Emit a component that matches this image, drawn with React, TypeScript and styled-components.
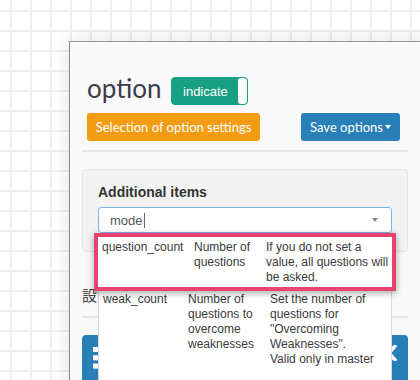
import React from 'react';
import styled, { createGlobalStyle } from 'styled-components';

const GlobalStyle = createGlobalStyle`
  html, body {
    margin: 0;
    height: 380px;
    overflow: hidden;
  }
  body {
    background-color: #fff;
    background-image:
      linear-gradient(to right, #efefef 2px, transparent 2px),
      linear-gradient(to bottom, #efefef 2px, transparent 2px);
    background-size: 20px 20px;
    background-position: 10px 10px;
    font-family: "Liberation Sans", Arial, sans-serif;
  }
`;

const Page = styled.div`
  padding: 41px 0 0 69px;
`;

const Panel = styled.div`
  width: 400px;
  height: 360px;
  box-sizing: border-box;
  padding-left: 12px;
  background: #f9f9f9;
  border-top: 1px solid #9a9a9a;
  border-left: 1px solid #8a8a8a;
  box-shadow: 0 0 18px rgba(0, 0, 0, 0.13);
`;

const Content = styled.div`
  width: 326px;
`;

// header: title + toggle
const Header = styled.div`
  display: flex;
  align-items: center;
  gap: 10px;
  height: 28px;
  margin-top: 35px;
  padding-left: 5px;
`;

const Title = styled.h1`
  margin: 0 0 7px;
  font-family: Lato, "Open Sans", sans-serif;
  font-size: 26px;
  font-weight: 400;
  line-height: 28px;
  color: #3c3b4a;
`;

const Toggle = styled.div`
  display: flex;
  width: 77px;
  height: 28px;
  box-sizing: border-box;
  border: 1px solid #18a084;
  border-radius: 4px;
  overflow: hidden;
  background: #19a084;
`;

const ToggleLabel = styled.span`
  flex: 1;
  padding-top: 2px;
  line-height: 24px;
  text-align: center;
  font-size: 13px;
  color: #fff;
`;

const ToggleKnob = styled.span`
  width: 9px;
  background: #fff;
  border-radius: 3px;
`;

const ButtonRow = styled.div`
  display: flex;
  justify-content: space-between;
  margin-top: 8px;
  padding: 0 8px 0 5px;
`;

const Button = styled.button<{ $color: string; $w: number }>`
  width: ${(p) => p.$w}px;
  height: 28px;
  padding: 0;
  border: none;
  border-radius: 3px;
  background: ${(p) => p.$color};
  color: #fff;
  font-family: Lato, "Open Sans", sans-serif;
  font-size: 13px;
  display: flex;
  align-items: center;
  justify-content: center;
`;

const Caret = styled.span<{ $color: string }>`
  display: inline-block;
  margin-left: 2px;
  border-top: 4px solid ${(p) => p.$color};
  border-left: 3px solid transparent;
  border-right: 3px solid transparent;
`;

const Divider = styled.div<{ $top: number }>`
  margin-top: ${(p) => p.$top}px;
  border-top: 2px solid #e6e6e6;
`;

const Well = styled.div`
  margin-top: 17px;
  padding: 12px 15px 18px;
  background: #f3f3f3;
  border: 1px solid #e6e6e6;
  border-radius: 4px;
`;

const Label = styled.div`
  margin-bottom: 5px;
  font-size: 14px;
  font-weight: 700;
  line-height: 20px;
  color: #333;
`;

const SelectWrap = styled.div`
  position: relative;
`;

const Select = styled.div`
  display: flex;
  align-items: center;
  justify-content: space-between;
  height: 26px;
  box-sizing: border-box;
  padding: 0 13px 0 11px;
  background: #fff;
  border: 1px solid #78b5e6;
  border-radius: 3px;
`;

const Value = styled.span`
  display: flex;
  align-items: center;
  font-size: 13px;
  color: #555;
`;

const Cursor = styled.span`
  width: 1px;
  height: 15px;
  margin-left: 1px;
  background: #666;
`;

const Dropdown = styled.div`
  position: absolute;
  top: 100%;
  left: 0;
  right: 0;
  z-index: 5;
  height: 190px;
  box-sizing: border-box;
  background: #fff;
  border: 1px solid #d8d8d8;
  border-top: none;
`;

const Row = styled.div<{ $cols: string }>`
  display: grid;
  grid-template-columns: ${(p) => p.$cols};
  padding: 1px 0 0 4px;
  font-size: 12px;
  line-height: 15px;
  color: #3a3a3a;
  white-space: nowrap;
`;

const HighlightRow = styled(Row)`
  position: relative;
  margin: 0 -5px;
  padding: 3px 0 2px 4px;
  border: 4px solid #e8436f;
  background: #fff;
  box-shadow: 0 2px 7px rgba(0, 0, 0, 0.35);
`;

// page text sitting under the open list
const SettingLabel = styled.div`
  margin-top: 33px;
  font-family: "Noto Sans CJK JP", sans-serif;
  font-size: 15px;
  line-height: 20px;
  color: #444;
`;

const BigButton = styled.div`
  display: flex;
  justify-content: space-between;
  align-items: flex-start;
  height: 60px;
  margin-top: 17px;
  padding: 10px 11px 0 11px;
  background: #2980b9;
  border-radius: 4px;
`;

const BarsIcon = () => (
  <svg width="24" height="22" viewBox="0 0 24 22" style={{ marginTop: 2 }}>
    <rect x="0" y="0" width="24" height="5" fill="#fff" />
    <rect x="0" y="8.3" width="24" height="5" fill="#fff" />
    <rect x="0" y="16.6" width="24" height="5" fill="#fff" />
  </svg>
);

const CloseIcon = () => (
  <svg width="16" height="16" viewBox="0 0 16 16">
    <path d="M1 0 L15 16 M15 0 L1 16" stroke="#fff" strokeWidth="3.5" />
  </svg>
);

const App = () => {
  return (
    <>
      <GlobalStyle />
      <Page>
        <Panel>
          <Content>
            <Header>
              <Title>option</Title>
              <Toggle>
                <ToggleLabel>indicate</ToggleLabel>
                <ToggleKnob />
              </Toggle>
            </Header>

            <ButtonRow>
              <Button $color="#f39c12" $w={173}>
                Selection of option settings
              </Button>
              <Button $color="#2980b9" $w={99}>
                Save options
                <Caret $color="#fff" />
              </Button>
            </ButtonRow>

            <Divider $top={9} />

            <Well>
              <Label>Additional items</Label>
              <SelectWrap>
                <Select>
                  <Value>
                    mode
                    <Cursor />
                  </Value>
                  <Caret $color="#888" />
                </Select>
                <Dropdown>
                  <HighlightRow $cols="92px 72px 1fr">
                    <span>question_count</span>
                    <span>
                      Number of
                      <br />
                      questions
                    </span>
                    <span>
                      If you do not set a
                      <br />
                      value, all questions will
                      <br />
                      be asked.
                    </span>
                  </HighlightRow>
                  <Row $cols="85px 82px 1fr">
                    <span>weak_count</span>
                    <span>
                      Number of
                      <br />
                      questions to
                      <br />
                      overcome
                      <br />
                      weaknesses
                    </span>
                    <span>
                      Set the number of
                      <br />
                      questions for
                      <br />
                      "Overcoming
                      <br />
                      Weaknesses".
                      <br />
                      Valid only in master
                    </span>
                  </Row>
                </Dropdown>
              </SelectWrap>
            </Well>

            <SettingLabel>設定</SettingLabel>

            <Divider $top={11} />

            <BigButton>
              <BarsIcon />
              <CloseIcon />
            </BigButton>
          </Content>
        </Panel>
      </Page>
    </>
  );
};

export default App;
